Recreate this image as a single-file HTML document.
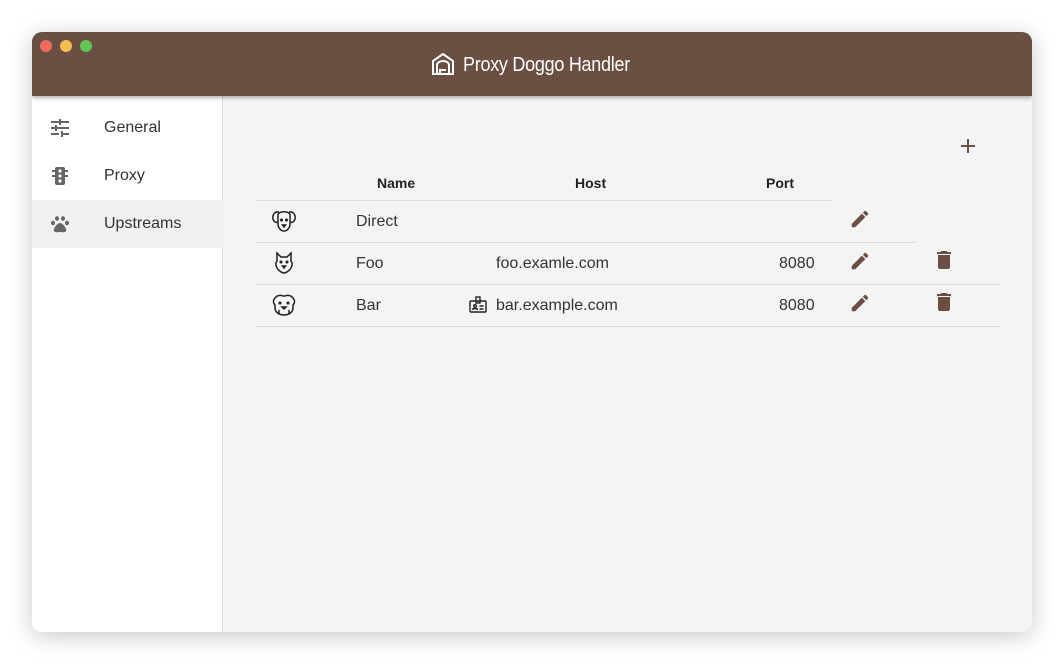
<!DOCTYPE html>
<html><head><meta charset="utf-8"><style>
*{margin:0;padding:0;box-sizing:border-box}
body{width:1064px;height:664px;background:#fff;font-family:"Liberation Sans",Roboto,sans-serif;position:relative;overflow:hidden}
.win{position:absolute;left:32px;top:32px;width:1000px;height:600px;border-radius:10px;overflow:hidden;background:#f4f4f4;box-shadow:0 4px 24px rgba(0,0,0,.22)}
.title{position:absolute;left:0;top:0;width:1000px;height:64px;background:#6b4f43;box-shadow:0 2px 4px rgba(0,0,0,.3);z-index:2}
.dot{position:absolute;top:8px;width:12px;height:12px;border-radius:50%}
.tt{position:absolute;left:431px;top:22px;color:#fff;font-size:20px;letter-spacing:-.3px;transform:scaleX(.9);transform-origin:left}
.side{position:absolute;left:0;top:64px;width:191px;height:536px;background:#fff;border-right:1px solid #e0e0e0}
.item{position:absolute;left:0;width:191px;height:48px;font-size:16px;color:#333}
.item span{position:absolute;left:72px;top:15px}
.item svg{position:absolute;left:18px;top:14px}
.t{position:absolute;font-size:16px;color:#333}
.h{position:absolute;font-size:14px;font-weight:bold;color:#222}
.ln{position:absolute;height:1px;background:#ddd}
</style></head><body>
<div class="win">
<div class="title">
<div class="dot" style="left:8px;background:#ed6a5e"></div>
<div class="dot" style="left:28px;background:#f5bf4f"></div>
<div class="dot" style="left:48px;background:#61c554"></div>
<svg style="position:absolute;left:399px;top:21px" width="24" height="22" viewBox="0 0 24 22" fill="none" stroke="#fff" stroke-width="2"><path d="M2 21V8L12 1l10 7v13z"/><path d="M6 21v-9a6 4 0 0 1 12 0v9"/><path d="M9 21v-4h6"/></svg>
<div class="tt">Proxy Doggo Handler</div>
</div>
<div class="side">
<div class="item" style="top:8px"><svg width="20" height="20" viewBox="0 0 20 20" fill="#666"><rect x="1" y="3" width="8" height="2"/><rect x="11" y="3" width="8" height="2"/><rect x="9" y="1" width="2" height="6"/><rect x="1" y="9" width="4" height="2"/><rect x="7" y="9" width="12" height="2"/><rect x="5" y="7" width="2" height="6"/><rect x="1" y="15" width="8" height="2"/><rect x="11" y="15" width="8" height="2"/><rect x="11" y="13" width="2" height="6"/></svg><span>General</span></div>
<div class="item" style="top:56px"><svg width="20" height="20" viewBox="0 0 20 20" fill="#666"><rect x="5" y="1" width="10" height="18" rx="2"/><rect x="2" y="4" width="3" height="2"/><rect x="15" y="4" width="3" height="2"/><rect x="2" y="9" width="3" height="2"/><rect x="15" y="9" width="3" height="2"/><circle cx="10" cy="5" r="1.6" fill="#fff"/><circle cx="10" cy="10" r="1.6" fill="#fff"/><circle cx="10" cy="15" r="1.6" fill="#fff"/></svg><span>Proxy</span></div>
<div class="item" style="top:104px;background:#f0f0f0"><svg width="20" height="20" viewBox="0 0 20 20" fill="#666"><ellipse cx="3" cy="9" rx="2" ry="2.3"/><ellipse cx="7" cy="4.5" rx="2" ry="2.3"/><ellipse cx="13" cy="4.5" rx="2" ry="2.3"/><ellipse cx="17" cy="9" rx="2" ry="2.3"/><path d="M10 9c-3 0-7 6-6 8s4 1 6 1 5 1 6-1-3-8-6-8z"/></svg><span>Upstreams</span></div>
</div>
<svg style="position:absolute;left:929px;top:107px" width="14" height="14" viewBox="0 0 14 14" stroke="#6b4f43" stroke-width="2"><path d="M7 0v14M0 7h14"/></svg>
<div class="h" style="left:345px;top:143px">Name</div>
<div class="h" style="left:543px;top:143px">Host</div>
<div class="h" style="left:734px;top:143px">Port</div>
<div class="ln" style="left:224px;top:168px;width:576px"></div>
<div class="ln" style="left:224px;top:210px;width:660px"></div>
<div class="ln" style="left:224px;top:252px;width:744px"></div>
<div class="ln" style="left:224px;top:294px;width:744px"></div>
<svg style="position:absolute;left:239px;top:177px" width="26" height="24" viewBox="0 0 26 24" fill="none" stroke="#222" stroke-width="1.5"><path d="M8 3C4 2 1 6 2 10c1 3 3 4 5 3M18 3c4-1 7 3 6 7-1 3-3 4-5 3"/><path d="M7 5c3-3 9-3 12 0v10c0 4-3 7-6 7s-6-3-6-7z"/><circle cx="10.5" cy="11" r=".8" fill="#222"/><circle cx="15.5" cy="11" r=".8" fill="#222"/><path d="M11.5 16h3l-1.5 2z" fill="#222"/></svg>
<div class="t" style="left:324px;top:181px">Direct</div>
<svg style="position:absolute;left:240px;top:219px" width="24" height="24" viewBox="0 0 24 24" fill="none" stroke="#222" stroke-width="1.5"><path d="M5 2l4 4h6l4-4v8c2 2 1 5 0 7-2 3-5 5-7 5s-5-2-7-5c-1-2-2-5 0-7z"/><circle cx="9" cy="11" r=".8" fill="#222"/><circle cx="15" cy="11" r=".8" fill="#222"/><path d="M10.5 15h3l-1.5 2z" fill="#222"/></svg>
<div class="t" style="left:324px;top:223px">Foo</div>
<div class="t" style="left:464px;top:223px">foo.examle.com</div>
<div class="t" style="left:747px;top:223px">8080</div>
<svg style="position:absolute;left:239px;top:261px" width="26" height="24" viewBox="0 0 26 24" fill="none" stroke="#222" stroke-width="1.5"><path d="M4 5c2-3 6-3 8-2h2c2-1 6-1 8 2 2 2 2 5 0 7v3c0 4-4 7-9 7s-9-3-9-7v-3c-2-2-2-5 0-7z"/><circle cx="9" cy="10" r=".8" fill="#222"/><circle cx="17" cy="10" r=".8" fill="#222"/><path d="M11 14h4l-2 2zM8 20v-3M18 20v-3"/></svg>
<div class="t" style="left:324px;top:265px">Bar</div>
<svg style="position:absolute;left:437px;top:264px" width="18" height="18" viewBox="0 0 18 18" fill="none" stroke="#222" stroke-width="1.4"><rect x="1" y="5" width="16" height="11" rx="1"/><rect x="7" y="1" width="4" height="6"/><circle cx="6" cy="10" r="1.3"/><path d="M3.5 14c0-2 5-2 5 0M10.5 10h4M10.5 13h4"/></svg>
<div class="t" style="left:464px;top:265px">bar.example.com</div>
<div class="t" style="left:747px;top:265px">8080</div>
<svg style="position:absolute;left:817px;top:176px" width="22" height="22" viewBox="0 0 24 24" fill="#6b4f43"><path d="M3 17.25V21h3.75L17.81 9.94l-3.75-3.75L3 17.25zM20.71 7.04a1 1 0 0 0 0-1.41l-2.34-2.34a1 1 0 0 0-1.41 0l-1.830 1.83 3.75 3.75 1.83-1.83z"/></svg>
<svg style="position:absolute;left:817px;top:218px" width="22" height="22" viewBox="0 0 24 24" fill="#6b4f43"><path d="M3 17.25V21h3.75L17.81 9.94l-3.75-3.75L3 17.25zM20.71 7.04a1 1 0 0 0 0-1.41l-2.34-2.34a1 1 0 0 0-1.41 0l-1.83 1.83 3.75 3.75 1.83-1.83z"/></svg>
<svg style="position:absolute;left:817px;top:260px" width="22" height="22" viewBox="0 0 24 24" fill="#6b4f43"><path d="M3 17.25V21h3.75L17.81 9.94l-3.75-3.75L3 17.25zM20.71 7.04a1 1 0 0 0 0-1.41l-2.34-2.34a1 1 0 0 0-1.41 0l-1.83 1.83 3.75 3.75 1.83-1.83z"/></svg>
<svg style="position:absolute;left:900px;top:216px" width="24" height="24" viewBox="0 0 24 24" fill="#6b4f43"><path d="M6 19c0 1.1.9 2 2 2h8c1.1 0 2-.9 2-2V7H6v12zM19 4h-3.5l-1-1h-5l-1 1H5v2h14V4z"/></svg>
<svg style="position:absolute;left:900px;top:258px" width="24" height="24" viewBox="0 0 24 24" fill="#6b4f43"><path d="M6 19c0 1.1.9 2 2 2h8c1.1 0 2-.9 2-2V7H6v12zM19 4h-3.5l-1-1h-5l-1 1H5v2h14V4z"/></svg>
</div>
</body></html>
